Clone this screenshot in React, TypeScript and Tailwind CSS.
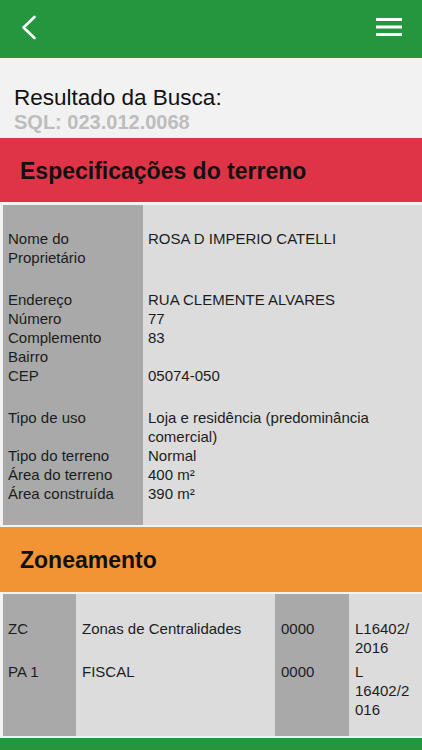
const font = { fontFamily: '"Liberation Sans", Arial, sans-serif' };

const specs: [string[], string[]][] = [
  [["Nome do", "Proprietário"], ["ROSA D IMPERIO CATELLI"]],
];

const address: [string, string][] = [
  ["Endereço", "RUA CLEMENTE ALVARES"],
  ["Número", "77"],
  ["Complemento", "83"],
  ["Bairro", ""],
  ["CEP", "05074-050"],
];

const usage: [string, string][] = [
  ["Tipo de uso", "Loja e residência (predominância comercial)"],
  ["Tipo do terreno", "Normal"],
  ["Área do terreno", "400 m²"],
  ["Área construída", "390 m²"],
];

const zones = [
  { code: "ZC", name: "Zonas de Centralidades", num: "0000", law: ["L16402/", "2016"] },
  { code: "PA 1", name: "FISCAL", num: "0000", law: ["L", "16402/2", "016"] },
];

function Pair({ label, value }: { label: React.ReactNode; value: React.ReactNode }) {
  return (
    <>
      <div className="bg-[#a9a9a9] pl-[5px] pr-2">{label}</div>
      <div className="bg-[#dcdcdc] pl-[5px] pr-[40px]">{value}</div>
    </>
  );
}

function Spacer() {
  return (
    <>
      <div className="bg-[#a9a9a9] h-[23px]" />
      <div className="bg-[#dcdcdc] h-[23px]" />
    </>
  );
}

export default function App() {
  return (
    <div className="w-[422px] h-[750px] overflow-hidden bg-[#f2f2f2] text-[#1c1c1c]" style={font}>
      <header className="h-[58px] bg-[#24973e] flex items-center justify-between pl-[21px] pr-[19px]">
        <svg width="16" height="26" viewBox="0 0 16 26" className="-mt-[3px]">
          <path d="M13.5 2 L2.5 12.5 L13.5 23" fill="none" stroke="white" strokeWidth="2.6" strokeLinecap="round" strokeLinejoin="round" />
        </svg>
        <svg width="28" height="20" viewBox="0 0 28 20" className="-mt-[5px]">
          <g stroke="white" strokeWidth="3" strokeLinecap="butt">
            <line x1="1" y1="2.5" x2="27" y2="2.5" />
            <line x1="1" y1="10" x2="27" y2="10" />
            <line x1="1" y1="17.5" x2="27" y2="17.5" />
          </g>
        </svg>
      </header>

      <div className="h-[80px] px-[14px] pt-[27px]">
        <p className="text-[22.5px] leading-[26px] text-[#111]">Resultado da Busca:</p>
        <p className="text-[20px] leading-[23px] font-bold text-[#bdbdbd]">SQL: 023.012.0068</p>
      </div>

      <div className="h-[64px] bg-[#df3447] flex items-center px-[20px]">
        <h2 className="text-[23px] font-bold text-[#111] mt-[2px]">Especificações do terreno</h2>
      </div>

      <div className="mt-[3px] ml-[3px] grid grid-cols-[140px_1fr] text-[15px] leading-[19px]">
        <div className="bg-[#a9a9a9] h-[23.5px]" />
        <div className="bg-[#dcdcdc] h-[23.5px]" />
        {specs.map(([l, v], i) => (
          <Pair
            key={i}
            label={l.map((t) => <div key={t}>{t}</div>)}
            value={v.map((t) => <div key={t}>{t}</div>)}
          />
        ))}
        <Spacer />
        {address.map(([l, v]) => (
          <Pair key={l} label={l} value={v || "\u00a0"} />
        ))}
        <Spacer />
        {usage.map(([l, v]) => (
          <Pair key={l} label={l} value={v} />
        ))}
        <div className="bg-[#a9a9a9] h-[22.5px]" />
        <div className="bg-[#dcdcdc] h-[22.5px]" />
      </div>

      <div className="mt-[2px] h-[65px] bg-[#f29434] flex items-center px-[20px]">
        <h2 className="text-[23px] font-bold text-[#111] mt-[2px]">Zoneamento</h2>
      </div>

      <div className="mt-[2px] ml-[3px] grid grid-cols-[73px_199px_74px_1fr] text-[15px] leading-[19px]">
        <div className="bg-[#a9a9a9] h-[24.5px]" />
        <div className="bg-[#dcdcdc] h-[24.5px]" />
        <div className="bg-[#a9a9a9] h-[24.5px]" />
        <div className="bg-[#dcdcdc] h-[24.5px]" />
        {zones.map((z, i) => (
          <div key={z.code} className="contents">
            <div className={`bg-[#a9a9a9] pl-[5px] ${i === 0 ? "pb-[5.5px]" : "pb-[16.5px]"}`}>{z.code}</div>
            <div className={`bg-[#dcdcdc] pl-[6px] ${i === 0 ? "pb-[5.5px]" : "pb-[16.5px]"}`}>{z.name}</div>
            <div className={`bg-[#a9a9a9] pl-[6px] ${i === 0 ? "pb-[5.5px]" : "pb-[16.5px]"}`}>{z.num}</div>
            <div className={`bg-[#dcdcdc] pl-[6px] ${i === 0 ? "pb-[5.5px]" : "pb-[16.5px]"}`}>
              {z.law.map((t) => (
                <div key={t}>{t}</div>
              ))}
            </div>
          </div>
        ))}
      </div>

      <div className="mt-[2px] h-[20px] bg-[#24973e]" />
    </div>
  );
}
